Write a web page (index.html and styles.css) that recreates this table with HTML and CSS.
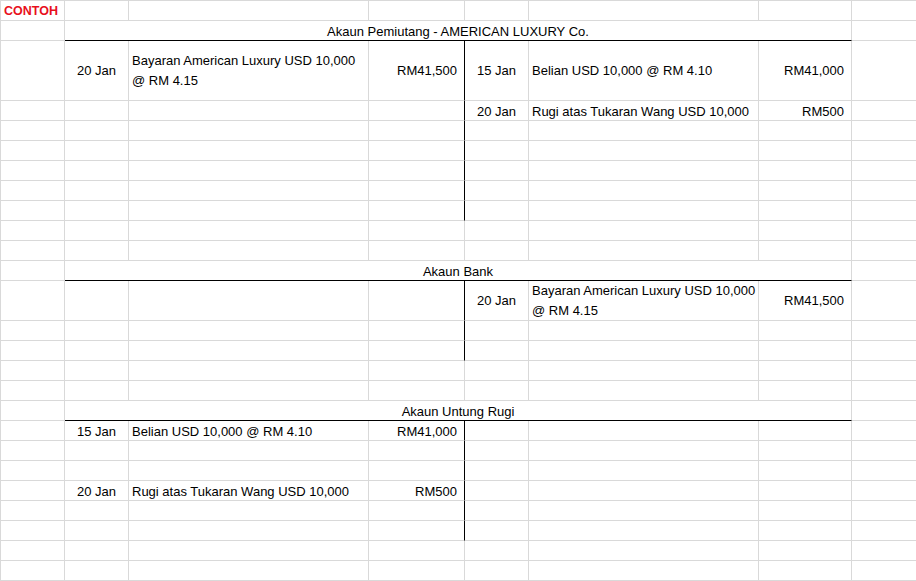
FILE: index.html
```html
<!DOCTYPE html>
<html lang="ms">
<head>
<meta charset="utf-8">
<title>Contoh</title>
<link rel="stylesheet" href="styles.css">
</head>
<body>
<div class="sheet">
  <!-- r1 -->
  <div class="c red"><span>CONTOH</span></div><div class="c"></div><div class="c"></div><div class="c"></div><div class="c"></div><div class="c"></div><div class="c"></div><div class="c"></div>
  <!-- r2 -->
  <div class="c"></div><div class="c title"><span>Akaun Pemiutang - AMERICAN LUXURY Co.</span></div><div class="c"></div>
  <!-- r3 -->
  <div class="c"></div>
  <div class="c mid ctr"><span>20 Jan</span></div>
  <div class="c mid"><span>Bayaran American Luxury USD 10,000<br>@ RM 4.15</span></div>
  <div class="c mid num vr"><span>RM41,500</span></div>
  <div class="c mid ctr"><span>15 Jan</span></div>
  <div class="c mid"><span>Belian USD 10,000 @ RM 4.10</span></div>
  <div class="c mid num"><span>RM41,000</span></div>
  <div class="c"></div>
  <!-- r4 -->
  <div class="c"></div><div class="c"></div><div class="c"></div><div class="c vr"></div>
  <div class="c ctr"><span>20 Jan</span></div>
  <div class="c"><span>Rugi atas Tukaran Wang USD 10,000</span></div>
  <div class="c num"><span>RM500</span></div>
  <div class="c"></div>
  <!-- r5-r9 -->
  <div class="c"></div><div class="c"></div><div class="c"></div><div class="c vr"></div><div class="c"></div><div class="c"></div><div class="c"></div><div class="c"></div>
  <div class="c"></div><div class="c"></div><div class="c"></div><div class="c vr"></div><div class="c"></div><div class="c"></div><div class="c"></div><div class="c"></div>
  <div class="c"></div><div class="c"></div><div class="c"></div><div class="c vr"></div><div class="c"></div><div class="c"></div><div class="c"></div><div class="c"></div>
  <div class="c"></div><div class="c"></div><div class="c"></div><div class="c vr"></div><div class="c"></div><div class="c"></div><div class="c"></div><div class="c"></div>
  <div class="c"></div><div class="c"></div><div class="c"></div><div class="c vr"></div><div class="c"></div><div class="c"></div><div class="c"></div><div class="c"></div>
  <!-- r10-r11 -->
  <div class="c"></div><div class="c"></div><div class="c"></div><div class="c"></div><div class="c"></div><div class="c"></div><div class="c"></div><div class="c"></div>
  <div class="c"></div><div class="c"></div><div class="c"></div><div class="c"></div><div class="c"></div><div class="c"></div><div class="c"></div><div class="c"></div>
  <!-- r12 -->
  <div class="c"></div><div class="c title"><span>Akaun Bank</span></div><div class="c"></div>
  <!-- r13 -->
  <div class="c"></div><div class="c"></div><div class="c"></div><div class="c vr"></div>
  <div class="c mid ctr"><span>20 Jan</span></div>
  <div class="c mid"><span>Bayaran American Luxury USD 10,000<br>@ RM 4.15</span></div>
  <div class="c mid num"><span>RM41,500</span></div>
  <div class="c"></div>
  <!-- r14-r15 -->
  <div class="c"></div><div class="c"></div><div class="c"></div><div class="c vr"></div><div class="c"></div><div class="c"></div><div class="c"></div><div class="c"></div>
  <div class="c"></div><div class="c"></div><div class="c"></div><div class="c vr"></div><div class="c"></div><div class="c"></div><div class="c"></div><div class="c"></div>
  <!-- r16-r17 -->
  <div class="c"></div><div class="c"></div><div class="c"></div><div class="c"></div><div class="c"></div><div class="c"></div><div class="c"></div><div class="c"></div>
  <div class="c"></div><div class="c"></div><div class="c"></div><div class="c"></div><div class="c"></div><div class="c"></div><div class="c"></div><div class="c"></div>
  <!-- r18 -->
  <div class="c"></div><div class="c title"><span>Akaun Untung Rugi</span></div><div class="c"></div>
  <!-- r19 -->
  <div class="c"></div>
  <div class="c ctr"><span>15 Jan</span></div>
  <div class="c"><span>Belian USD 10,000 @ RM 4.10</span></div>
  <div class="c num vr"><span>RM41,000</span></div>
  <div class="c"></div><div class="c"></div><div class="c"></div><div class="c"></div>
  <!-- r20-r21 -->
  <div class="c"></div><div class="c"></div><div class="c"></div><div class="c vr"></div><div class="c"></div><div class="c"></div><div class="c"></div><div class="c"></div>
  <div class="c"></div><div class="c"></div><div class="c"></div><div class="c vr"></div><div class="c"></div><div class="c"></div><div class="c"></div><div class="c"></div>
  <!-- r22 -->
  <div class="c"></div>
  <div class="c ctr"><span>20 Jan</span></div>
  <div class="c"><span>Rugi atas Tukaran Wang USD 10,000</span></div>
  <div class="c num vr"><span>RM500</span></div>
  <div class="c"></div><div class="c"></div><div class="c"></div><div class="c"></div>
  <!-- r23-r24 -->
  <div class="c"></div><div class="c"></div><div class="c"></div><div class="c vr"></div><div class="c"></div><div class="c"></div><div class="c"></div><div class="c"></div>
  <div class="c"></div><div class="c"></div><div class="c"></div><div class="c vr"></div><div class="c"></div><div class="c"></div><div class="c"></div><div class="c"></div>
  <!-- r25-r27 -->
  <div class="c"></div><div class="c"></div><div class="c"></div><div class="c"></div><div class="c"></div><div class="c"></div><div class="c"></div><div class="c"></div>
  <div class="c"></div><div class="c"></div><div class="c"></div><div class="c"></div><div class="c"></div><div class="c"></div><div class="c"></div><div class="c"></div>
  <div class="c"></div><div class="c"></div><div class="c"></div><div class="c"></div><div class="c"></div><div class="c"></div><div class="c"></div><div class="c"></div>
</div>
</body>
</html>
```
FILE: styles.css
```css
html, body {
  margin: 0;
  padding: 0;
  background: #ffffff;
  overflow: hidden;
}

body {
  width: 916px;
  height: 581px;
  font-family: "Liberation Sans", Arial, sans-serif;
  font-size: 13px;
  color: #000000;
}

.sheet {
  display: grid;
  grid-template-columns: 64px 64px 240px 96px 64px 230px 93px 65px;
  grid-template-rows: 20px 20px 60px repeat(9, 20px) 40px repeat(14, 20px);
  border-left: 1px solid #d9d9d9;
  border-top: 1px solid #d9d9d9;
  width: max-content;
}

.c {
  box-sizing: border-box;
  border-right: 1px solid #d9d9d9;
  border-bottom: 1px solid #d9d9d9;
  display: flex;
  align-items: flex-end;
  padding: 0 3px 0 3px;
  line-height: 17px;
  white-space: nowrap;
  min-width: 0;
}

.c > span {
  display: block;
}

.mid {
  align-items: center;
  line-height: 20px;
}

.ctr {
  justify-content: center;
}

.num {
  justify-content: flex-end;
  padding-right: 7px;
}

.vr {
  border-right-color: #000000;
}

.title {
  grid-column: span 6;
  justify-content: center;
  border-bottom-color: #000000;
}

.red {
  color: #e8101c;
  font-weight: bold;
  font-size: 12.5px;
}
```
